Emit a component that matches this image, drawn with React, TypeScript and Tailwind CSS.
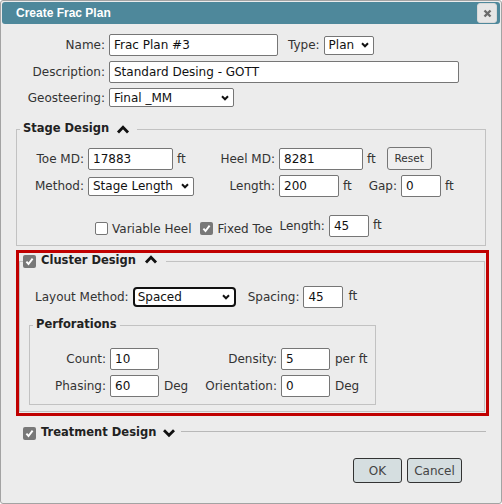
import React from "react";

function SelChevron() {
  return (
    <svg width="8" height="6" viewBox="0 0 8 6" className="shrink-0">
      <polyline points="1,1.3 4,4.3 7,1.3" fill="none" stroke="#111" strokeWidth="2" />
    </svg>
  );
}

function Caret({ dir }: { dir: "up" | "down" }) {
  return (
    <svg width="14" height="10" viewBox="0 0 14 10" className="shrink-0">
      <polyline
        points={dir === "up" ? "2,8.5 7,3.2 12,8.5" : "2,2.2 7,7.2 12,2.2"}
        fill="none"
        stroke="#111"
        strokeWidth="2.8"
      />
    </svg>
  );
}

function Check({ checked }: { checked: boolean }) {
  if (!checked)
    return <div className="w-[13px] h-[13px] shrink-0 rounded-[2px] border border-[#767676] bg-white" />;
  return (
    <div className="w-[13px] h-[13px] shrink-0 rounded-[2px] bg-[#787878] flex items-center justify-center">
      <svg width="9" height="9" viewBox="0 0 9 9">
        <polyline points="1.4,4.6 3.5,7 7.6,1.6" fill="none" stroke="#fff" strokeWidth="1.9" />
      </svg>
    </div>
  );
}

function Inp({ w, value }: { w: string; value: string }) {
  return (
    <input
      readOnly
      value={value}
      className={`${w} h-[22px] shrink-0 border border-[#767676] rounded-[2px] bg-white px-[4px] text-[12px] text-[#111] outline-none font-['DejaVu_Sans',sans-serif]`}
    />
  );
}

function Sel({ w, value, focus }: { w: string; value: string; focus?: boolean }) {
  return (
    <div
      className={`${w} shrink-0 flex items-center justify-between bg-white text-[#111] ${
        focus
          ? "h-[20px] border-2 border-[#111] rounded-[4px] pl-[3px] pr-[4px]"
          : "h-[19px] border border-[#767676] rounded-[2px] pl-[4px] pr-[4px]"
      }`}
    >
      <span className="leading-none">{value}</span>
      <SelChevron />
    </div>
  );
}

function Group({
  legend,
  children,
  className = "",
  bodyClass = "",
}: {
  legend: React.ReactNode;
  children: React.ReactNode;
  className?: string;
  bodyClass?: string;
}) {
  return (
    <div className={`flex flex-col ${className}`}>
      <div className="flex h-[16px]">
        <div className="w-[4px] h-[8px] self-end border-t border-l border-[#c2c2c2]" />
        <div className="flex items-center">{legend}</div>
        <div className="flex-1 h-[8px] self-end border-t border-r border-[#c2c2c2]" />
      </div>
      <div className={`border-x border-b border-[#c2c2c2] ${bodyClass}`}>{children}</div>
    </div>
  );
}

export default function App() {
  return (
    <div className="w-[502px] h-[504px] bg-[#ececec] border border-[#a3a3a3] rounded-[3px] flex flex-col text-[12px] text-[#333] font-['DejaVu_Sans',sans-serif]">
      {/* Title bar */}
      <div className="m-[1px] h-[22px] bg-[#4e889b] rounded-[3px] flex items-center justify-between pl-[14px] pr-[3px]">
        <span className="text-white font-bold text-[12px] font-['Liberation_Sans',sans-serif]">Create Frac Plan</span>
        <div className="w-[20px] h-[20px] rounded-[3px] bg-[#e6e6e6] border border-[#d8d8d8] flex items-center justify-center">
          <svg width="9" height="9" viewBox="0 0 9 9">
            <path d="M1.5 1.5 L7.5 7.5 M7.5 1.5 L1.5 7.5" stroke="#6a6a6a" strokeWidth="2.4" />
          </svg>
        </div>
      </div>

      {/* Top form */}
      <div className="pt-[9px] flex flex-col gap-[5px]">
        <div className="flex items-center h-[22px]">
          <div className="w-[104px] text-right">Name:</div>
          <div className="ml-[4px]">
            <Inp w="w-[169px]" value="Frac Plan #3" />
          </div>
          <div className="ml-[10px]">Type:</div>
          <div className="ml-[4px]">
            <Sel w="w-[50px]" value="Plan" />
          </div>
        </div>
        <div className="flex items-center h-[22px]">
          <div className="w-[104px] text-right">Description:</div>
          <div className="ml-[4px]">
            <Inp w="w-[350px]" value="Standard Desing - GOTT" />
          </div>
        </div>
        <div className="flex items-center h-[19px]">
          <div className="w-[104px] text-right">Geosteering:</div>
          <div className="ml-[4px]">
            <Sel w="w-[125px]" value="Final _MM" />
          </div>
        </div>
      </div>

      {/* Stage Design */}
      <Group
        className="mt-[14px] mx-[15px]"
        bodyClass="pl-[15px] pt-[10px] pb-[8px]"
        legend={
          <div className="flex items-center px-[3px] gap-[7px] pr-[7px]">
            <span className="font-bold text-[11.5px] text-[#222]">Stage Design</span>
            <Caret dir="up" />
          </div>
        }
      >
        <div className="flex items-center h-[23px]">
          <div className="w-[52px] text-right">Toe MD:</div>
          <div className="ml-[4px]">
            <Inp w="w-[85px]" value="17883" />
          </div>
          <div className="w-[17px] pl-[4px]">ft</div>
          <div className="w-[85px] text-right">Heel MD:</div>
          <div className="ml-[4px]">
            <Inp w="w-[84px]" value="8281" />
          </div>
          <div className="pl-[4px]">ft</div>
          <div className="ml-[11px] w-[45px] h-[23px] border border-[#767676] rounded-[3px] bg-[#efefef] flex items-center justify-center text-[10.5px] text-[#333]">
            Reset
          </div>
        </div>
        <div className="flex items-center h-[22px] mt-[5px]">
          <div className="w-[52px] text-right">Method:</div>
          <div className="ml-[4px]">
            <Sel w="w-[106px]" value="Stage Length" />
          </div>
          <div className="w-[81px] text-right">Length:</div>
          <div className="ml-[4px]">
            <Inp w="w-[60px]" value="200" />
          </div>
          <div className="w-[17px] pl-[4px]">ft</div>
          <div className="w-[41px] text-right">Gap:</div>
          <div className="ml-[4px]">
            <Inp w="w-[40px]" value="0" />
          </div>
          <div className="pl-[4px]">ft</div>
        </div>
        <div className="flex items-center h-[22px] mt-[18px] ml-[63px]">
          <div className="flex items-center pt-[5px]">
            <Check checked={false} />
            <span className="ml-[4px]">Variable Heel</span>
            <div className="ml-[8px]">
              <Check checked={true} />
            </div>
            <span className="ml-[5px]">Fixed Toe</span>
          </div>
          <span className="ml-[7px]">Length:</span>
          <div className="ml-[4px]">
            <Inp w="w-[40px]" value="45" />
          </div>
          <span className="pl-[4px] pb-[3px]">ft</span>
        </div>
      </Group>

      {/* Cluster Design (highlighted) */}
      <div className="mt-[4px] ml-[15px] w-[473px] border-[3px] border-[#c00000] pr-[1px] pb-[1px]">
        <Group
          bodyClass="pl-[10px] pt-[16px] pb-[6px]"
          legend={
            <div className="flex items-center pr-[8px]">
              <Check checked={true} />
              <span className="ml-[5px] font-bold text-[11.5px] text-[#222]">Cluster Design</span>
              <div className="ml-[8px] -mt-[4px]">
                <Caret dir="up" />
              </div>
            </div>
          }
        >
          <div className="flex items-center h-[23px] ml-[5px]">
            <span>Layout Method:</span>
            <div className="ml-[4px]">
              <Sel w="w-[103px]" value="Spaced" focus />
            </div>
            <span className="ml-[12px]">Spacing:</span>
            <div className="ml-[4px]">
              <Inp w="w-[40px]" value="45" />
            </div>
            <span className="ml-[5px] pb-[2px]">ft</span>
          </div>

          <Group
            className="mt-[9px] -ml-px w-[347px]"
            bodyClass="pl-[8px] pt-[15px] pb-[7px]"
            legend={<span className="px-[3px] font-bold text-[11.5px] text-[#222]">Perforations</span>}
          >
            <div className="flex items-center h-[22px]">
              <div className="w-[68px] text-right">Count:</div>
              <div className="ml-[4px]">
                <Inp w="w-[49px]" value="10" />
              </div>
              <div className="w-[40px] pl-[5px]" />
              <div className="w-[78px] text-right">Density:</div>
              <div className="ml-[4px]">
                <Inp w="w-[49px]" value="5" />
              </div>
              <div className="pl-[5px]">per ft</div>
            </div>
            <div className="flex items-center h-[22px] mt-[5px]">
              <div className="w-[68px] text-right">Phasing:</div>
              <div className="ml-[4px]">
                <Inp w="w-[49px]" value="60" />
              </div>
              <div className="w-[40px] pl-[5px]">Deg</div>
              <div className="w-[78px] text-right">Orientation:</div>
              <div className="ml-[4px]">
                <Inp w="w-[49px]" value="0" />
              </div>
              <div className="pl-[5px]">Deg</div>
            </div>
          </Group>
        </Group>
      </div>

      {/* Treatment Design */}
      <div className="mt-[9px] h-[16px] flex items-center ml-[22px] mr-[15px]">
        <Check checked={true} />
        <span className="ml-[5px] font-bold text-[11.5px] text-[#222]">Treatment Design</span>
        <div className="ml-[6px]">
          <Caret dir="down" />
        </div>
        <div className="ml-[5px] flex-1 self-start mt-[6px] border-t border-[#b8b8b8]" />
      </div>

      {/* Buttons */}
      <div className="mt-[17px] flex justify-end gap-[5px] mr-[39px]">
        <div className="w-[49px] h-[25px] border border-[#333] rounded-[3px] bg-[#d5dee0] flex items-center justify-center text-[#444]">
          OK
        </div>
        <div className="w-[55px] h-[25px] border border-[#333] rounded-[3px] bg-[#d5dee0] flex items-center justify-center text-[#444]">
          Cancel
        </div>
      </div>
    </div>
  );
}
